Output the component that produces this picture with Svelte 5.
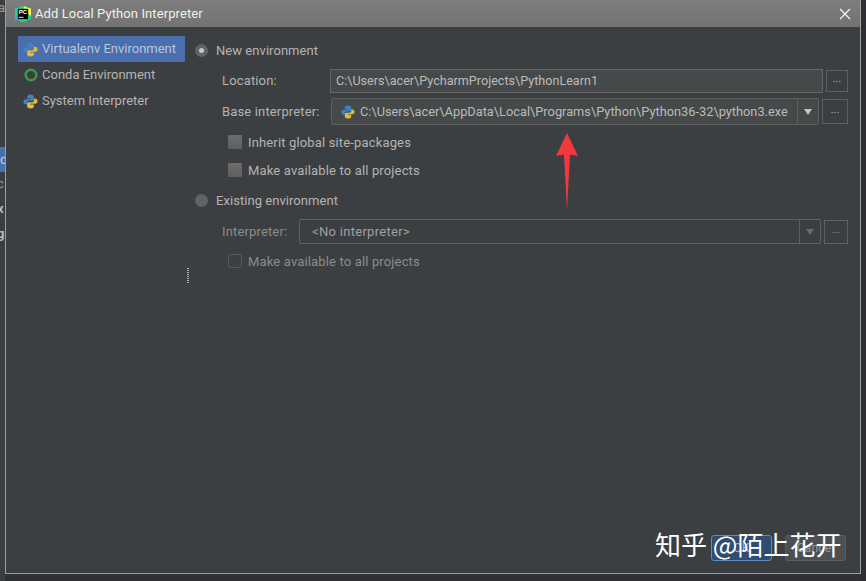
<script>
    const sidebar = [
        { label: "Virtualenv Environment", icon: "python", selected: true },
        { label: "Conda Environment", icon: "conda" },
        { label: "System Interpreter", icon: "python" }
    ];
</script>

{#snippet pythonIcon(size)}
    <svg width={size} height={size} viewBox="0 0 16 16">
        <path d="M8 0.500C5.300 0.500 4.400 1.600 4.400 2.900V4.800H8.200V5.500H2.900C1.400 5.500 0.500 6.700 0.500 8.200C0.500 9.900 1.400 11 2.900 11H4.500V9.200C4.500 8 5.500 7.200 6.500 7.200H9.800C10.900 7.200 11.600 6.500 11.600 5.500V2.900C11.600 1.600 10.500 0.500 8 0.500Z" fill="#3d84c0"/>
        <path d="M8 15.500C10.700 15.500 11.600 14.400 11.600 13.100V11.200H7.800V10.500H13.100C14.600 10.500 15.500 9.300 15.500 7.800C15.500 6.100 14.600 5 13.100 5H11.700V6.800C11.700 8 10.500 8.800 9.500 8.800H6.200C5.100 8.800 4.400 9.500 4.400 10.500V13.100C4.400 14.400 5.500 15.500 8 15.500Z" fill="#e2bb3c"/>
    </svg>
{/snippet}

<div class="screen">
    <div class="strip left">
        <span class="bit a">a</span>
        <span class="bit sel">c</span>
        <span class="bit c">c</span>
        <span class="bit x">x</span>
        <span class="bit g">g</span>
    </div>

    <div class="dialog">
        <header class="titlebar">
            <svg class="pc" width="16" height="16" viewBox="0 0 17 17">
                <path d="M0 3L9 0L17 3V14L9 17L0 14Z" fill="#21d789"/>
                <path d="M9 0L17 3V11L11 5Z" fill="#fcf84a"/>
                <path d="M0 8L6 17H12L0 14Z" fill="#07c3f2"/>
                <rect x="3" y="3" width="11" height="11" fill="#000"/>
                <text x="4" y="9" class="pc-text">PC</text>
                <rect x="4" y="11.500" width="5" height="1" fill="#fff"/>
            </svg>
            <span class="title">Add Local Python Interpreter</span>
            <svg class="close" width="12" height="12" viewBox="0 0 12 12">
                <path d="M1 1L11 11M11 1L1 11" stroke="#f2f2f2" stroke-width="1.300"/>
            </svg>
        </header>

        <div class="body">
            <nav class="sidebar">
                {#each sidebar as item}
                    <div class="item" class:selected={item.selected}>
                        {#if item.icon === "conda"}
                            <svg class="conda" width="14" height="14" viewBox="0 0 14 14">
                                <circle cx="7" cy="7" r="5.300" fill="none" stroke="#3f9c48" stroke-width="2.400"/>
                            </svg>
                        {:else}
                            {@render pythonIcon(15)}
                        {/if}
                        <span class="item-label">{item.label}</span>
                    </div>
                {/each}
            </nav>

            <form class="form">
                <div class="radio-row first">
                    <span class="radio on"><i></i></span>
                    <span>New environment</span>
                </div>

                <div class="row location">
                    <span class="label wide">Location:</span>
                    <div class="field">C:\Users\acer\PycharmProjects\PythonLearn1</div>
                    <div class="more">...</div>
                </div>

                <div class="row base">
                    <span class="label wide">Base interpreter:</span>
                    <div class="combo">
                        <span class="value">
                            {@render pythonIcon(14)}
                            C:\Users\acer\AppData\Local\Programs\Python\Python36-32\python3.exe
                        </span>
                        <span class="drop"><b></b></span>
                    </div>
                    <div class="more tall">...</div>
                </div>

                <div class="check-row c1"><span class="box"></span><span>Inherit global site-packages</span></div>
                <div class="check-row c2"><span class="box"></span><span>Make available to all projects</span></div>

                <div class="radio-row second">
                    <span class="radio"></span>
                    <span>Existing environment</span>
                </div>

                <div class="row dim interp">
                    <span class="label">Interpreter:</span>
                    <div class="combo off">
                        <span class="value">&lt;No interpreter&gt;</span>
                        <span class="drop"><b></b></span>
                    </div>
                    <div class="more off">...</div>
                </div>

                <div class="check-row c3 dim"><span class="box empty"></span><span>Make available to all projects</span></div>
            </form>
        </div>

        <footer class="buttons">
            <div class="btn ok">OK</div>
            <div class="btn cancel">Cancel</div>
        </footer>
    </div>

    <div class="strip right"></div>

    <div class="splitter"></div>

    <svg class="arrow" width="24" height="80" viewBox="0 0 24 80">
        <path d="M12 1L23 24L15 22.500L12 78L9 22.500L1 24Z" fill="#f2383c"/>
    </svg>

    <div class="watermark">知乎 @陌上花开</div>
</div>

<style>
    :global(body) {
        background: #2f3136;
        overflow: hidden;
    }

    .screen {
        position: relative;
        display: flex;
        width: 866px;
        height: 581px;
        overflow: hidden;
        background: #2f3136;
        font-family: Roboto, "Noto Sans", sans-serif;
        font-size: 13px;
        letter-spacing: 0.15px;
        color: #b4b4b4;
    }

    .strip.left {
        position: relative;
        width: 5px;
        background: #3a3d42;
        flex: none;
        overflow: hidden;
    }

    .bit {
        position: absolute;
        left: -3px;
        color: #999;
    }
    .bit.a { top: 0; left: -2px; }
    .bit.sel {
        top: 147px;
        left: 0;
        width: 5px;
        height: 25px;
        line-height: 25px;
        background: #4b6eaf;
        color: #ccc;
    }
    .bit.c { top: 176px; }
    .bit.x { top: 201px; font-weight: 700; color: #bbb; }
    .bit.g { top: 226px; font-weight: 700; color: #bbb; }

    .strip.right {
        flex: 1;
        background: #2d2f33;
    }

    .dialog {
        width: 856px;
        height: 574px;
        flex: none;
        display: flex;
        flex-direction: column;
        box-sizing: border-box;
        background: #3c3f41;
        border: solid #9d9fa1;
        border-width: 0 1px 1px 1px;
    }

    .titlebar {
        display: flex;
        align-items: center;
        height: 27px;
        flex: none;
        padding: 0 9px 0 9px;
        background: linear-gradient(#7d7d7d, #737373);
        color: #f0f0f0;
    }

    .pc { flex: none; margin-right: 4px; }
    .pc-text { font-size: 6.500px; font-weight: 700; fill: #fff; font-family: "Liberation Sans", sans-serif; letter-spacing: 0; }
    .title { flex: 1; letter-spacing: 0.1px; padding-bottom: 1px; }

    .body {
        flex: 1;
        display: flex;
        min-height: 0;
    }

    .sidebar {
        width: 167px;
        flex: none;
        margin: 9px 0 0 12px;
    }

    .item {
        display: flex;
        align-items: center;
        gap: 4px;
        height: 26px;
        padding-left: 5px;
        white-space: nowrap;
        letter-spacing: 0;
    }
    .item-label { padding-bottom: 2px; }
    .conda { margin-left: 1px; }

    .item.selected {
        background: #4b6eaf;
        color: #b9c6dc;
    }

    .form {
        flex: 1;
        padding: 14px 12px 0 10px;
        min-width: 0;
    }

    .radio-row {
        display: flex;
        align-items: center;
        gap: 8px;
        height: 18px;
        letter-spacing: 0.05px;
    }
    .radio-row.second { margin-top: 12px; }

    .radio {
        width: 13px;
        height: 13px;
        border-radius: 50%;
        background: #5f6365;
        display: flex;
        align-items: center;
        justify-content: center;
    }
    .radio i {
        width: 5px;
        height: 5px;
        border-radius: 50%;
        background: #c8c8c8;
    }

    .row {
        display: flex;
        align-items: center;
        margin-left: 27px;
    }
    .row.location { margin-top: 10px; }
    .row.base { margin-top: 5px; }
    .row.interp { margin-top: 10px; }

    .label { flex: none; }
    .label.wide { width: 108px; }
    .location .label { padding-bottom: 2px; }
    .interp .label { width: 77px; }

    .field {
        flex: none;
        width: 493px;
        height: 24px;
        line-height: 22px;
        box-sizing: border-box;
        padding-left: 5px;
        background: #45494a;
        border: 1px solid #646464;
        font-size: 12.600px;
        letter-spacing: 0;
        color: #bbb;
    }

    .more {
        flex: none;
        width: 22px;
        height: 22px;
        margin-left: 3px;
        box-sizing: border-box;
        border: 1px solid #5e6060;
        text-align: center;
        line-height: 16px;
        font-size: 10px;
        color: #bbb;
    }
    .more.tall { width: 26px; height: 25px; line-height: 19px; }
    .more.off { width: 24px; height: 24px; line-height: 18px; color: #999; }

    .combo {
        flex: none;
        display: flex;
        width: 488px;
        height: 27px;
        box-sizing: border-box;
        margin-left: 1px;
        background: #45494a;
        border: 1px solid #5e6060;
        border-radius: 2px;
        font-size: 12.800px;
        letter-spacing: 0;
        color: #bbb;
    }
    .combo.off {
        width: 522px;
        height: 25px;
        margin-left: 0;
        background: #3c3f41;
        font-size: 13px;
        letter-spacing: 0.3px;
        color: #a0a0a0;
    }

    .value {
        flex: 1;
        display: flex;
        align-items: center;
        gap: 5px;
        padding-left: 9px;
        white-space: nowrap;
    }
    .combo.off .value { padding-left: 12px; }

    .drop {
        flex: none;
        width: 20px;
        display: flex;
        align-items: center;
        justify-content: center;
        border-left: 1px solid #5e6060;
    }
    .drop b {
        width: 0;
        height: 0;
        border: 4px solid transparent;
        border-top: 6px solid #c4c4c4;
        border-bottom: 0;
    }
    .combo.off .drop b { border-top-color: #6a6d6e; }

    .check-row {
        display: flex;
        align-items: center;
        gap: 6px;
        height: 18px;
        margin-left: 33px;
    }
    .check-row.c1 { margin-top: 8px; }
    .check-row.c2 { margin-top: 10px; }
    .check-row.c3 { margin-top: 8px; }

    .box {
        width: 14px;
        height: 14px;
        flex: none;
        background: linear-gradient(#6c6c6c, #5f5f5f);
        border-radius: 1px;
    }
    .box.empty {
        background: none;
        box-sizing: border-box;
        border: 1px solid #565859;
        border-radius: 2px;
    }

    .dim { color: #8a8c8d; }

    .buttons {
        flex: none;
        display: flex;
        justify-content: flex-end;
        gap: 13px;
        padding: 0 14px 12px 0;
    }

    .btn {
        width: 61px;
        height: 26px;
        box-sizing: border-box;
        line-height: 24px;
        text-align: center;
        border-radius: 3px;
        font-size: 12px;
    }
    .btn.ok {
        background: #2f4c72;
        border: 1px solid #5f8dbe;
        color: #9fb0c4;
    }
    .btn.cancel {
        background: #4d5052;
        border: 1px solid #5e6060;
        color: #9a9a9a;
    }

    .splitter {
        position: absolute;
        left: 187px;
        top: 268px;
        width: 2px;
        height: 16px;
        background: repeating-linear-gradient(#b0b0b0 0 1px, transparent 1px 2px);
    }

    .arrow {
        position: absolute;
        left: 555px;
        top: 132px;
    }

    .watermark {
        position: absolute;
        left: 655px;
        top: 526px;
        font-family: "Noto Sans CJK SC", sans-serif;
        font-size: 26px;
        line-height: 36px;
        letter-spacing: 0;
        color: #fff;
        white-space: nowrap;
    }
</style>
